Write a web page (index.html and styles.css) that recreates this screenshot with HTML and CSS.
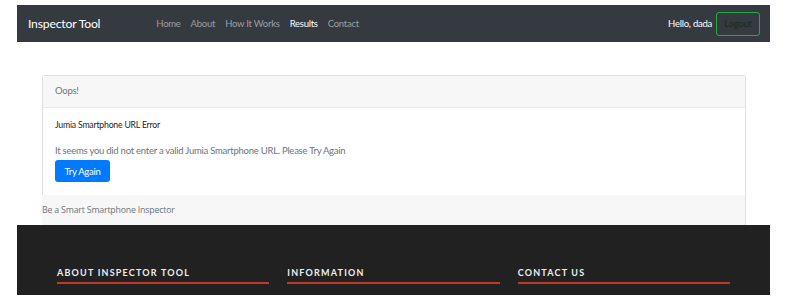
FILE: index.html
```html
<!DOCTYPE html>
<html lang="en">
<head>
    <meta charset="UTF-8">
    <meta name="viewport" content="width=device-width, initial-scale=1.0">
    <title>Inspector Tool - Results</title>
    <link rel="stylesheet" href="styles.css">
</head>
<body>
    <div class="page">
        <nav class="navbar">
            <a class="brand" href="#">Inspector Tool</a>
            <ul class="nav-links">
                <li><a href="#">Home</a></li>
                <li><a href="#">About</a></li>
                <li><a href="#">How It Works</a></li>
                <li><a class="active" href="#">Results</a></li>
                <li><a href="#">Contact</a></li>
            </ul>
            <div class="user">
                <span class="hello">Hello, dada</span>
                <button class="btn-logout">Logout</button>
            </div>
        </nav>

        <main class="content">
            <div class="card">
                <div class="card-header">Oops!</div>
                <div class="card-body">
                    <h5 class="card-title">Jumia Smartphone URL Error</h5>
                    <p class="card-text">It seems you did not enter a valid Jumia Smartphone URL. Please Try Again</p>
                    <a class="btn-primary" href="#">Try Again</a>
                </div>
                <div class="card-footer">Be a Smart Smartphone Inspector</div>
            </div>
        </main>

        <footer class="footer">
            <div class="footer-col">
                <h4>About Inspector Tool</h4>
            </div>
            <div class="footer-col">
                <h4>Information</h4>
            </div>
            <div class="footer-col">
                <h4>Contact Us</h4>
            </div>
        </footer>
    </div>
</body>
</html>
```

FILE: styles.css
```css
* {
    margin: 0;
    padding: 0;
    box-sizing: border-box;
}

body {
    background: #fff;
    font-family: Lato, "Open Sans", sans-serif;
    font-size: 9.5px;
    letter-spacing: -0.25px;
    color: #212529;
}

a {
    text-decoration: none;
}

.page {
    width: 753px;
    margin: 5px 0 0 17px;
}

/* 顶部导航 */
.navbar {
    display: flex;
    align-items: center;
    height: 37px;
    padding: 0 10px 0 11px;
    background-color: #343a40;
}

.brand {
    font-size: 12.2px;
    letter-spacing: -0.2px;
    color: #fff;
    margin-right: 51px;
}

.nav-links {
    display: flex;
    list-style: none;
}

.nav-links a {
    display: block;
    padding: 0 5px;
    color: rgba(255, 255, 255, .5);
}

.nav-links a.active {
    color: #fff;
}

.user {
    margin-left: auto;
    display: flex;
    align-items: center;
}

.hello {
    color: #fff;
    margin-right: 4px;
}

.btn-logout {
    font-family: inherit;
    font-size: 9.5px;
    letter-spacing: -0.25px;
    width: 44px;
    height: 24px;
    background: transparent;
    border: 1px solid #28a745;
    border-radius: 3px;
    color: #1d2a20;
}

/* 内容 */
.content {
    padding: 33px 24px 0 25px;
}

.card {
    border: 1px solid #dfdfdf;
    border-radius: 3px 3px 0 0;
    border-bottom: 0;
}

.card-header {
    height: 32px;
    display: flex;
    align-items: center;
    padding: 0 12px 2px;
    background: #f7f7f7;
    border-bottom: 1px solid #ececec;
    color: #6c757d;
}

.card-body {
    padding: 10px 12px 13px;
}

.card-title {
    font-size: 8.7px;
    letter-spacing: -0.2px;
    font-weight: normal;
    color: #212529;
    line-height: 13px;
    margin-bottom: 13px;
}

.card-text {
    color: #6c757d;
    line-height: 14px;
    margin-bottom: 2px;
}

.btn-primary {
    display: inline-flex;
    align-items: center;
    justify-content: center;
    width: 55px;
    height: 22px;
    background: #007bff;
    border-radius: 3px;
    color: #fff;
}

.card-footer {
    height: 30px;
    display: flex;
    align-items: center;
    margin-left: -1px;
    background: #f7f7f7;
    font-family: "Open Sans", sans-serif;
    font-size: 8.8px;
    letter-spacing: -0.2px;
    color: #6c757d;
}

/* 页脚 */
.footer {
    display: grid;
    grid-template-columns: repeat(3, 1fr);
    gap: 18px;
    height: 70px;
    padding: 42px 40px 0;
    background: #212121;
}

.footer-col h4 {
    font-size: 9px;
    font-weight: bold;
    letter-spacing: 1.2px;
    text-transform: uppercase;
    color: #eee;
    line-height: 11px;
    padding-bottom: 4px;
    border-bottom: 2px solid #c0392b;
}
```
